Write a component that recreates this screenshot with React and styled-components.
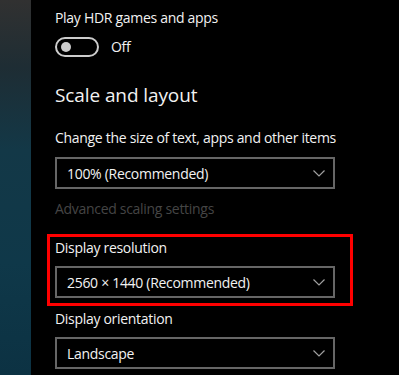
import React from "react";
import styled, { createGlobalStyle } from "styled-components";

const Global = createGlobalStyle`
  html, body { margin: 0; padding: 0; background: #000; }
  body { font-family: "Segoe UI", "Open Sans", "Noto Sans", sans-serif; }
  #root { width: 399px; height: 375px; overflow: hidden; }
`;

const Screen = styled.div`
  display: flex;
  width: 399px;
  height: 375px;
  background: #000;
  overflow: hidden;
`;

const Sidebar = styled.div`
  flex: 0 0 31px;
  background: linear-gradient(180deg, #313131 0%, #1e2d34 18%, #133847 40%, #0f3849 70%, #0c3243 100%);
`;

const Content = styled.div`
  flex: 1;
  display: flex;
  flex-direction: column;
  padding: 8px 0 0 24px;
  width: 280px;
`;

const Label = styled.div`
  font-size: 14px;
  letter-spacing: -0.3px;
  line-height: 20px;
  color: ${(p) => (p.$disabled ? "#454545" : "#f2f2f2")};
  margin-top: ${(p) => p.$mt || 0}px;
  white-space: nowrap;
`;

const Heading = styled.div`
  font-size: 19px;
  letter-spacing: -0.1px;
  line-height: 28px;
  color: #f2f2f2;
  margin-top: ${(p) => p.$mt || 0}px;
  white-space: nowrap;
`;

const ToggleRow = styled.div`
  display: flex;
  align-items: center;
  gap: 12px;
  margin-top: 9px;
`;

const Toggle = styled.div`
  box-sizing: border-box;
  width: 44px;
  height: 20px;
  border: 2px solid #cccccc;
  border-radius: 10px;
  display: flex;
  align-items: center;
  padding-left: 3.5px;
`;

const Knob = styled.div`
  width: 10px;
  height: 10px;
  border-radius: 50%;
  background: #cccccc;
`;

const ToggleText = styled.span`
  font-size: 14px;
  letter-spacing: -0.3px;
  line-height: 20px;
  color: #f2f2f2;
`;

const Select = styled.div`
  box-sizing: border-box;
  width: 280px;
  height: 32px;
  margin-top: ${(p) => p.$mt || 0}px;
  border: 2px solid #666666;
  display: flex;
  align-items: center;
  justify-content: space-between;
  padding: 0 8px 0 10px;
  font-size: 14px;
  letter-spacing: -0.3px;
  color: #f2f2f2;
  white-space: nowrap;
`;

const Highlight = styled.div`
  display: flex;
  flex-direction: column;
  margin: ${(p) => p.$mt || 0}px 0 0 -8px;
  width: 290px;
  border: 3px solid #ff0000;
  padding: 1px 5px 5px 5px;
`;

const Chevron = () => (
  <svg width="12" height="7" viewBox="0 0 12 7" fill="none">
    <path d="M0.5 0.5 L6 6 L11.5 0.5" stroke="#a0a0a0" strokeWidth="1.2" />
  </svg>
);

const Dropdown = ({ value, mt }) => (
  <Select $mt={mt}>
    <span>{value}</span>
    <Chevron />
  </Select>
);

export default function App() {
  return (
    <Screen>
      <Global />
      <Sidebar />
      <Content>
        <Label>Play HDR games and apps</Label>
        <ToggleRow>
          <Toggle>
            <Knob />
          </Toggle>
          <ToggleText>Off</ToggleText>
        </ToggleRow>
        <Heading $mt={24}>Scale and layout</Heading>
        <Label $mt={19}>Change the size of text, apps and other items</Label>
        <Dropdown mt={9} value="100% (Recommended)" />
        <Label $mt={10} $disabled>Advanced scaling settings</Label>
        <Highlight $mt={15}>
          <Label>Display resolution</Label>
          <Dropdown mt={8} value="2560 × 1440 (Recommended)" />
        </Highlight>
        <Label $mt={3}>Display orientation</Label>
        <Dropdown mt={8} value="Landscape" />
      </Content>
    </Screen>
  );
}
